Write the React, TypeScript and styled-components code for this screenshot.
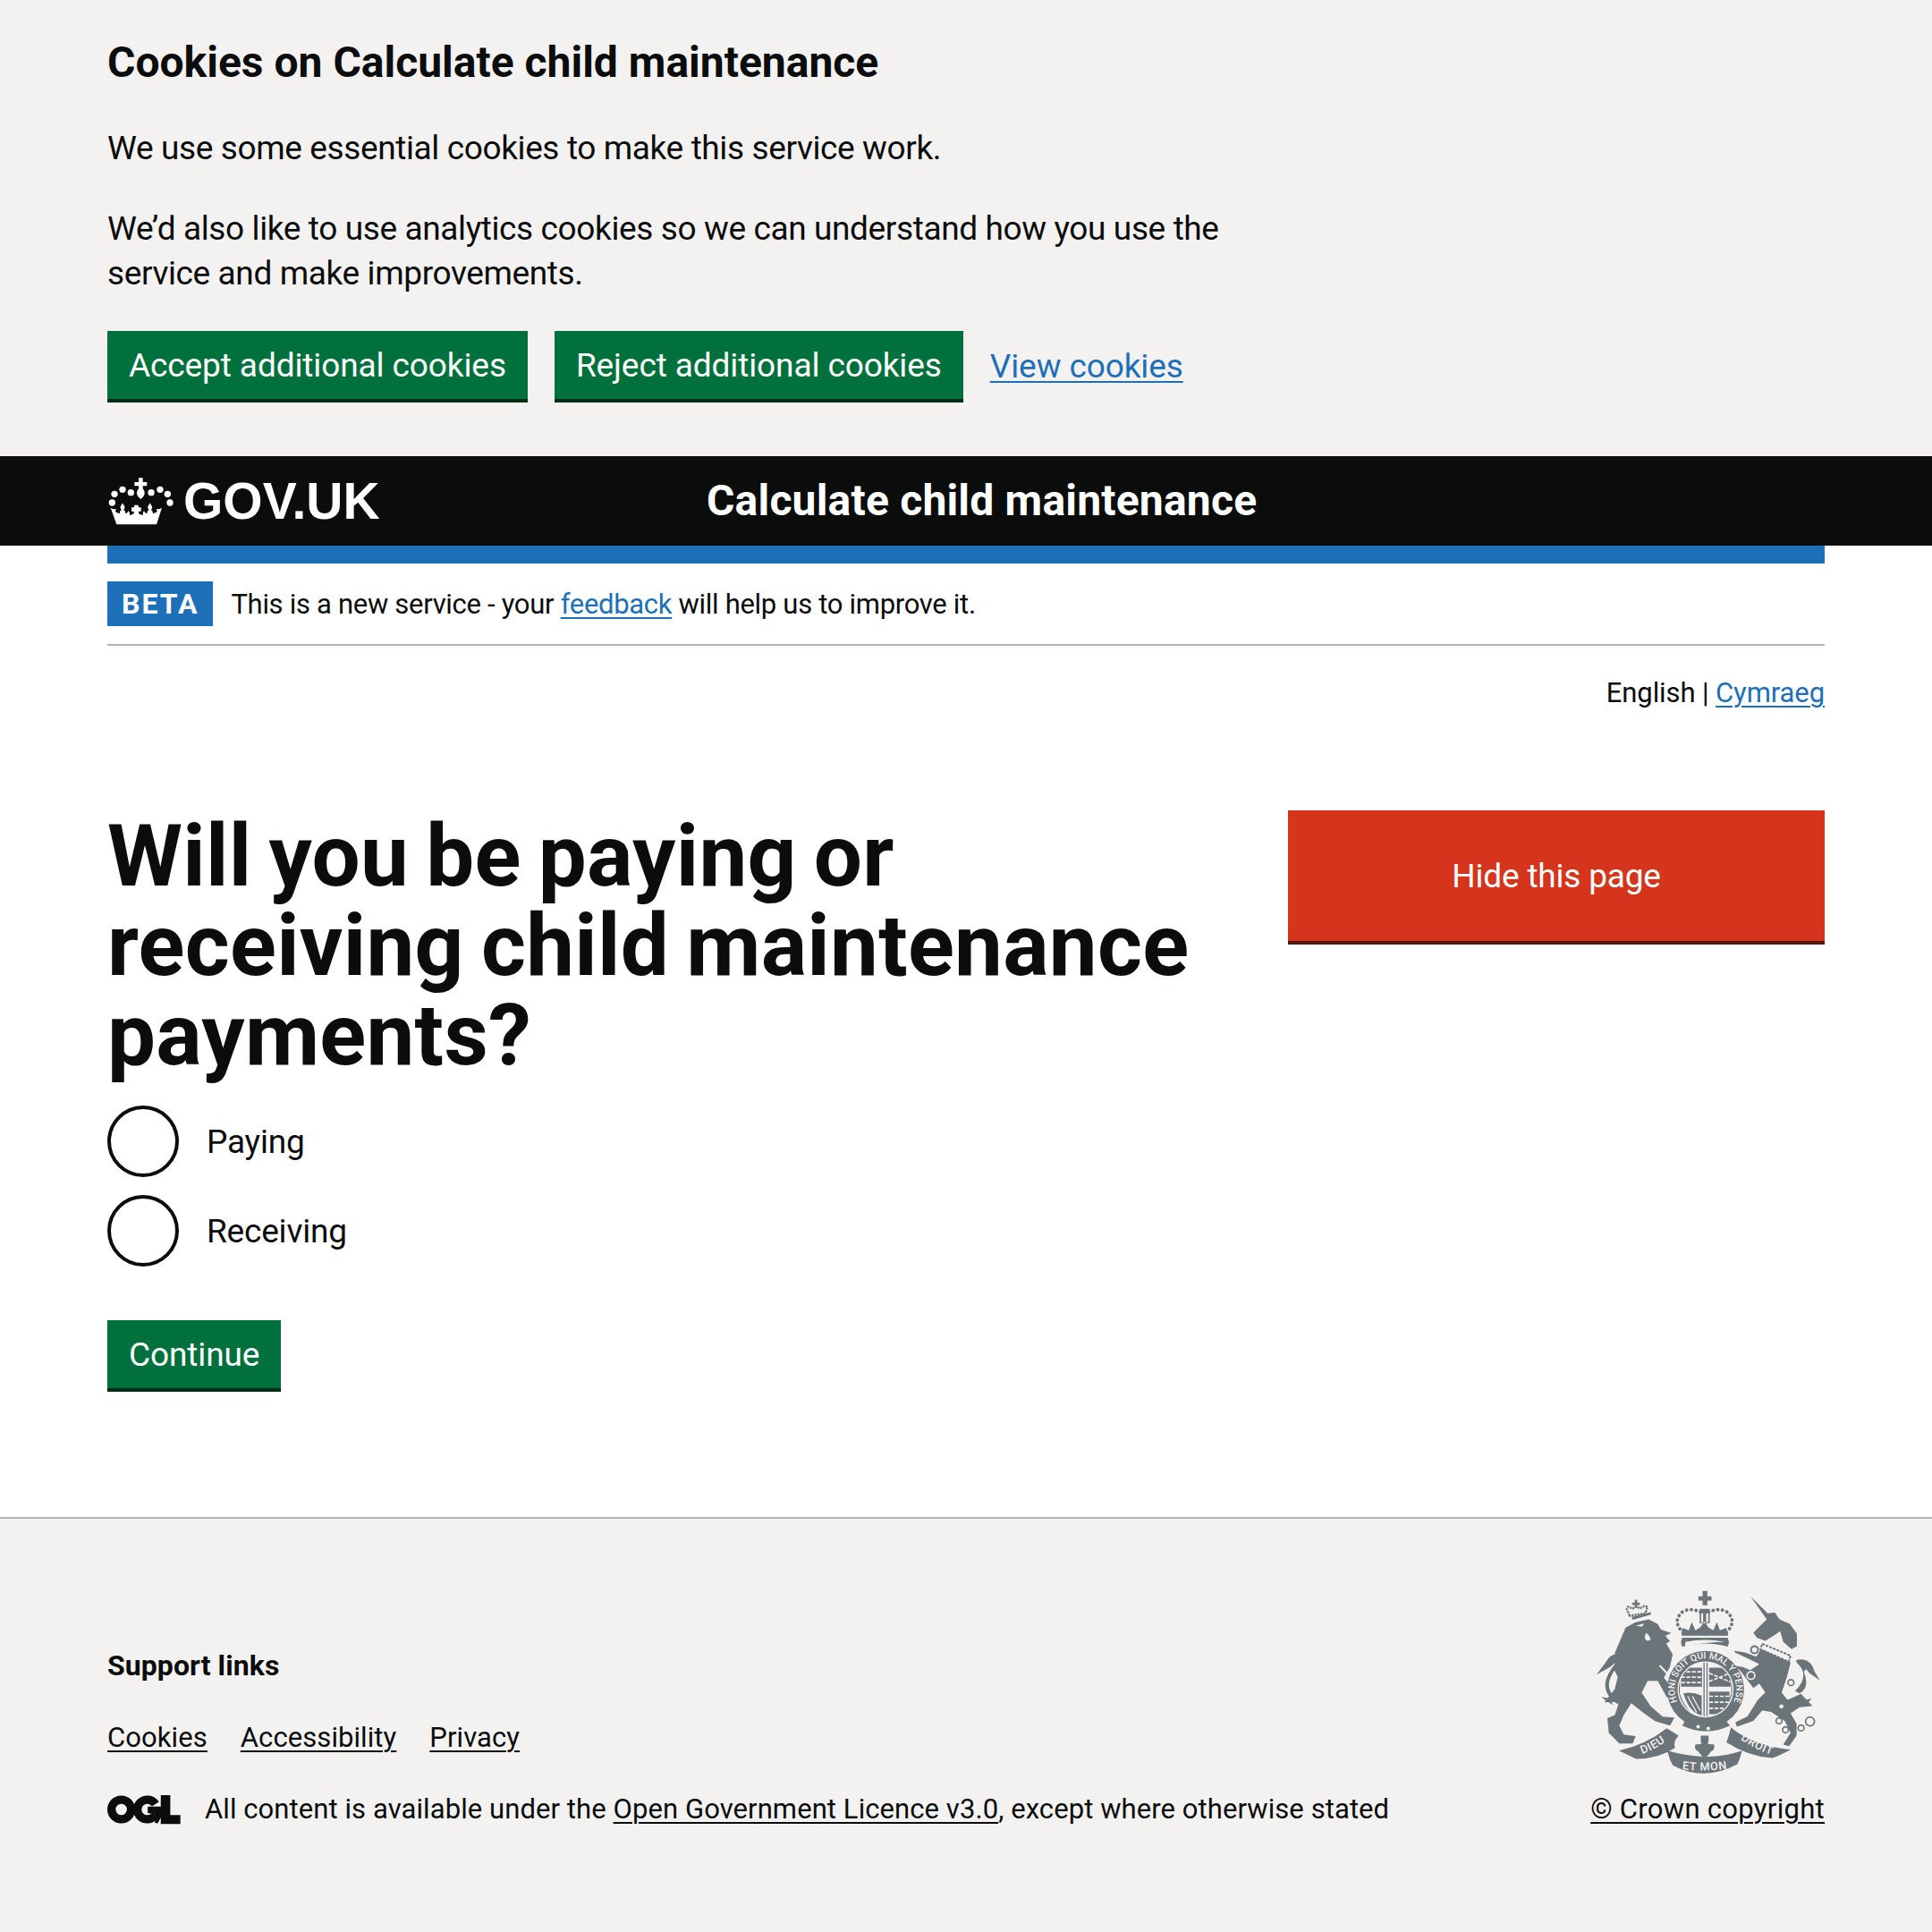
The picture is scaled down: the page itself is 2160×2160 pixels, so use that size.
import React from 'react';
import styled, { createGlobalStyle } from 'styled-components';

const GlobalStyle = createGlobalStyle`
  html, body {
    margin: 0;
    padding: 0;
    background: #ffffff;
    color: #0b0c0c;
    font-family: Roboto, 'Liberation Sans', sans-serif;
  }
  * { box-sizing: border-box; }
`;

function CrownLogo() {
  return (
    <CrownSvg viewBox="55 90 225 165" aria-hidden="true">
      <g fill="#fff">
        <circle cx="71" cy="177" r="11" />
        <circle cx="79" cy="148" r="11" />
        <circle cx="106" cy="133" r="11" />
        <circle cx="134" cy="143" r="11" />
        <circle cx="202" cy="143" r="11" />
        <circle cx="232" cy="133" r="11" />
        <circle cx="257" cy="148" r="11" />
        <circle cx="265" cy="177" r="11" />
        <path d="M160 94h14v14h14v13h-14v8q16 20 -7 36q-23 -16 -7 -36v-8h-14v-13h14z" />
        <path d="M66 194q10 6 18 4l-2 10 14 6q0-10 6-12l-4-10 8-14 8 14-4 10q6 2 6 12 8-2 10-10 6 6 4 16l14-6v-8h-8v-13h9v-8h14v8h9v13h-8v8l14 6q-2-10 4-16 2 8 10 10 0-10 6-12l-4-10 8-14 8 14-4 10q6 2 6 12l14-6-2-10q8 2 18-4l-18 56H86z" />
      </g>
    </CrownSvg>
  );
}

function OglLogo() {
  return (
    <OglSvg viewBox="60 65 247 102" aria-hidden="true">
      <circle cx="107" cy="116" r="33" fill="none" stroke="#0b0c0c" strokeWidth="28" />
      <path d="M222 98a33 33 0 1 0 0 36" fill="none" stroke="#0b0c0c" strokeWidth="28" />
      <path d="M196 106h44v-38h32v67h34v30h-66v-22l-10 20-10-2v-30l-24-3z" fill="#0b0c0c" />
    </OglSvg>
  );
}

function RoyalArms() {
  const ink = '#6b7478';
  const paper = '#f3f2f1';
  return (
    <ArmsSvg viewBox="60 50 770 620" aria-hidden="true">
      <defs>
        <path id="ring-motto" d="M372 462A103 103 0 1 1 508 462" />
        <path id="ribbon-left" d="M212 606Q270 590 320 548" />
        <path id="ribbon-mid" d="M345 650Q435 664 530 648" />
        <path id="ribbon-right" d="M548 546Q600 585 672 608" />
        <clipPath id="shield-clip">
          <circle cx="440" cy="385" r="90" />
        </clipPath>
      </defs>
      <g fill={ink}>
        {/* lion */}
        <path d="M172 178l33-18 45-10 30 16 10 18 35 12-20 10 16 18-13 7 22 36-10 44-20 35 34 40 6 24-30 1-30-55h-34l-20 40 30 45 40 35 40 3-15 27-50-15-35-25-45-35-25 40-15 35 15 30 40 5-10 25h-45l-35-35-5-50 25-10 15-45-50 2 35-45 10-40-15-30 10-30-5-20z" />
        <path d="M178 240l-8 30 14-6zM190 205l-14 20 18-4z" />
        <path d="M206 172l28-8-6 10zM240 196q12 4 16 22-14 10-20-6zM288 302l44 46-8 2-40-44z" fill={paper} />
        {/* lion crown */}
        <path d="M186 138l-10-22 4-8 16 6 12-8 12 8 14-8 12 2-8 22z" fill="none" stroke={ink} strokeWidth="7" strokeDasharray="7 3" />
        <path d="M192 142l64-16 2 8-62 18zM203 84h8v10h9v8h-9v10h-8v-10h-9v-8h9z" />
        {/* lion tail */}
        <path d="M150 430q-60-40-30-95 22-45 45-40 8 10-10 35" fill="none" stroke={ink} strokeWidth="12" />
        <path d="M150 265q-30 0-45 30l-30 40 45-25 30-25zM120 415l-30-5 40 28z" />
        {/* unicorn */}
        <path d="M590 72l58 58 24-3 16 23 34 15 24 33v42l-18 10-28-25-10-35-22 15-28 17-28-10-12-17 25-25 20-20z" />
        <path d="M625 250l100 45-13 50-17 50 20 25 45-20 38 40-43 5-30 20 20 35v40l-25 35-20-5 25-40-20-40-45-30-30-5-30 35-55 20-5-15 40-20 35-55 25-25-20-30-20 15-45-60-20-15 30 5 25 10 30-20-30-15-50-23-5-7 40 7 35 13z" />
        <path d="M630 232l95 40-7 20-94-42z" fill="none" stroke={ink} strokeWidth="6" strokeDasharray="9 4" />
        <path d="M740 390q50-50 10-90-20-20 20-15 25 5 35 40l18 30-35-25-10-12q-8 0-8 10 20 50-15 70z" />
        <path d="M725 425q40 0 70-10l-20 25-45 5z" />
        <circle cx="604" cy="252" r="12" fill="none" stroke={ink} strokeWidth="6" />
        <circle cx="592" cy="338" r="13" fill="none" stroke={paper} strokeWidth="5" />
        <circle cx="726" cy="362" r="10" fill="none" stroke={ink} strokeWidth="5" />
        <circle cx="714" cy="408" r="7" fill={paper} />
        <circle cx="694" cy="442" r="7" fill={paper} />
        <circle cx="686" cy="490" r="10" fill="none" stroke={ink} strokeWidth="5" />
        <circle cx="708" cy="520" r="10" fill="none" stroke={ink} strokeWidth="5" />
        <circle cx="760" cy="514" r="10" fill="none" stroke={ink} strokeWidth="5" />
        <circle cx="790" cy="492" r="15" fill="none" stroke={ink} strokeWidth="5" />
        {/* top crown */}
        <g fill="none" stroke={ink} strokeWidth="11" strokeDasharray="1 15" strokeLinecap="round">
          <path d="M365 195q-40-40 0-72 35-15 72 12 35-27 72-12 40 32 0 72" />
        </g>
        <path d="M430 55h16v18h14v14h-14v16h-16v-16h-14v-14h14zM420 115h34v48h-34zM360 205h156l-6-26-22 8-10-28-12 28-16-10-14-20-14 20-16 10-12-28-10 28-22-8z" />
        <path d="M425 130h7v30h-7zM442 130h7v30h-7z" fill={paper} />
        <path d="M362 212h152q8 14 0 30-70-22-152 0-8-14 0-30z" />
        <path d="M372 226q66-14 132 0-66 0-132 14z" fill={paper} />
        {/* shield ring */}
        <circle cx="440" cy="385" r="129" />
        <circle cx="440" cy="385" r="94" fill={paper} />
        <g clipPath="url(#shield-clip)">
          <path d="M352 290q45-12 83-8v208q-60-20-83-90z" fill="none" stroke={ink} strokeWidth="4" />
          <path d="M528 290q-45-12-83-8v208q60-20 83-90z" fill="none" stroke={ink} strokeWidth="4" />
          <path d="M358 312h70v64h-70zM452 312h72v64h-72zM452 392h68v76h-68z" />
          <path d="M366 398q30-6 61 8v66q-42-10-61-74z" />
          <path d="M380 408l30 54M396 408l26 48" stroke={paper} strokeWidth="4" fill="none" />
          <path d="M358 326h70M358 344h70M358 362h70M452 330l72 30M452 358l72-28M452 408h68M452 428h68M452 448h68" stroke={paper} strokeWidth="5" fill="none" strokeDasharray="13 5" />
        </g>
        <path d="M370 492q70 40 140 0l12 14q-80 38-160 0z" />
        <circle cx="415" cy="510" r="6" fill={paper} />
        <circle cx="449" cy="516" r="6" fill={paper} />
        {/* motto ribbon */}
        <path d="M150 590q90-20 160-75l40 25q-20 20-12 40-50 35-130 38z" />
        <path d="M312 590q10 40 20 50 105 55 215-5 10-20 15-45-110 40-250 0z" />
        <path d="M510 562q8-20 15-50 70 60 200 75-40 20-60 28-80-5-155-53z" />
        <path d="M424 540h26v24h-26zM437 556q10 16 30 12 8 16-10 26-4 8-8 10l-12 14-12-14q-4-2-8-10-18-10-10-26 20 4 30-12z" />
      </g>
      <ArmsText>
        <textPath href="#ring-motto" startOffset="50%" textAnchor="middle">HONI SOIT QUI MAL Y PENSE</textPath>
      </ArmsText>
      <RibbonText>
        <textPath href="#ribbon-left" startOffset="50%" textAnchor="middle">DIEU</textPath>
      </RibbonText>
      <RibbonText>
        <textPath href="#ribbon-mid" startOffset="50%" textAnchor="middle">ET MON</textPath>
      </RibbonText>
      <RibbonText>
        <textPath href="#ribbon-right" startOffset="50%" textAnchor="middle">DROIT</textPath>
      </RibbonText>
    </ArmsSvg>
  );
}

export default function App() {
  return (
    <>
      <GlobalStyle />
      <CookieBanner>
        <Container>
          <CookieTitle>Cookies on Calculate child maintenance</CookieTitle>
          <CookieText>
            <Para>We use some essential cookies to make this service work.</Para>
            <Para>
              We’d also like to use analytics cookies so we can understand how you use the service
              and make improvements.
            </Para>
          </CookieText>
          <ButtonRow>
            <GreenButton>Accept additional cookies</GreenButton>
            <GreenButton>Reject additional cookies</GreenButton>
            <BodyLink href="#">View cookies</BodyLink>
          </ButtonRow>
        </Container>
      </CookieBanner>

      <Header>
        <HeaderInner>
          <LogoLink href="#">
            <CrownLogo />
            <LogoText>GOV.UK</LogoText>
          </LogoLink>
          <ServiceName href="#">Calculate child maintenance</ServiceName>
        </HeaderInner>
      </Header>

      <Container>
        <BlueBar />
        <PhaseBanner>
          <PhaseTag>BETA</PhaseTag>
          <PhaseText>
            This is a new service - your <BodyLink href="#">feedback</BodyLink> will help us to
            improve it.
          </PhaseText>
        </PhaseBanner>
        <LanguageRow>
          English | <BodyLink href="#">Cymraeg</BodyLink>
        </LanguageRow>

        <Main>
          <Question>
            <Heading>Will you be paying or receiving child maintenance payments?</Heading>
            <Radios>
              <RadioRow>
                <RadioCircle />
                <RadioLabel>Paying</RadioLabel>
              </RadioRow>
              <RadioRow>
                <RadioCircle />
                <RadioLabel>Receiving</RadioLabel>
              </RadioRow>
            </Radios>
            <GreenButton>Continue</GreenButton>
          </Question>
          <HideButton>Hide this page</HideButton>
        </Main>
      </Container>

      <Footer>
        <FooterInner>
          <FooterMeta>
            <SupportTitle>Support links</SupportTitle>
            <SupportLinks>
              <FooterLink href="#">Cookies</FooterLink>
              <FooterLink href="#">Accessibility</FooterLink>
              <FooterLink href="#">Privacy</FooterLink>
            </SupportLinks>
            <LicenceRow>
              <OglLogo />
              <span>
                All content is available under the{' '}
                <FooterLink href="#">Open Government Licence v3.0</FooterLink>, except where
                otherwise stated
              </span>
            </LicenceRow>
          </FooterMeta>
          <CopyrightBlock>
            <RoyalArms />
            <CopyrightLink href="#">© Crown copyright</CopyrightLink>
          </CopyrightBlock>
        </FooterInner>
      </Footer>
    </>
  );
}

const Container = styled.div`
  margin: 0 120px;
`;

const CookieBanner = styled.div`
  background: #f3f2f1;
  padding: 40px 0 60px;
`;

const CookieTitle = styled.h2`
  margin: 0 0 41px;
  font-size: 48px;
  line-height: 60px;
  font-weight: 700;
`;

const CookieText = styled.div`
  width: 1280px;
  font-size: 37px;
  line-height: 50px;
  letter-spacing: -0.38px;
`;

const Para = styled.p`
  margin: 0 0 40px;
  &:last-child {
    margin-bottom: 39px;
  }
`;

const ButtonRow = styled.div`
  display: flex;
  align-items: flex-start;
  gap: 30px;
`;

const GreenButton = styled.button`
  height: 76px;
  margin-bottom: 4px;
  padding: 2px 24px 0;
  border: 0;
  border-radius: 0;
  background: #00703c;
  box-shadow: 0 4px 0 #002d18;
  color: #ffffff;
  font: 400 37px/50px Roboto, 'Liberation Sans', sans-serif;
  letter-spacing: -0.1px;
`;

const BodyLink = styled.a`
  color: #1d70b8;
  text-decoration: underline;
  text-decoration-thickness: 2px;
  text-underline-offset: 4px;
  ${ButtonRow} > & {
    font-size: 37px;
    line-height: 80px;
    letter-spacing: -0.1px;
  }
`;

const Header = styled.header`
  height: 100px;
  background: #0b0c0c;
`;

const HeaderInner = styled(Container)`
  height: 100%;
  display: flex;
  align-items: center;
`;

const LogoLink = styled.a`
  width: 670px;
  display: flex;
  align-items: center;
  gap: 10px;
  color: #ffffff;
  text-decoration: none;
`;

const CrownSvg = styled.svg`
  width: 75px;
  height: 55px;
  flex: none;
`;

const LogoText = styled.span`
  font: 700 57px/1 'Liberation Sans', Arial, sans-serif;
`;

const ServiceName = styled.a`
  color: #ffffff;
  font-size: 48px;
  line-height: 60px;
  font-weight: 700;
  letter-spacing: 0.2px;
  text-decoration: none;
`;

const BlueBar = styled.div`
  height: 20px;
  background: #1d70b8;
`;

const PhaseBanner = styled.div`
  display: flex;
  align-items: center;
  gap: 20px;
  padding: 20px 0;
  border-bottom: 2px solid #b1b4b6;
`;

const PhaseTag = styled.strong`
  height: 50px;
  padding: 0 16px;
  background: #1d70b8;
  color: #ffffff;
  font-size: 32px;
  line-height: 50px;
  letter-spacing: 2px;
  font-weight: 700;
`;

const PhaseText = styled.span`
  padding-top: 2px;
  font-size: 31px;
  line-height: 48px;
  letter-spacing: -0.3px;
`;

const LanguageRow = styled.div`
  margin-top: 28px;
  text-align: right;
  font-size: 31px;
  line-height: 50px;
  letter-spacing: -0.1px;
`;

const Main = styled.main`
  margin-top: 105px;
  padding-bottom: 140px;
  display: flex;
  justify-content: space-between;
  align-items: flex-start;
`;

const Question = styled.div`
  width: 1240px;
`;

const Heading = styled.h1`
  margin: 0 0 29px;
  padding-top: 2px;
  font-size: 96px;
  line-height: 100px;
  font-weight: 700;
  letter-spacing: 0.3px;
  word-spacing: -5px;
`;

const Radios = styled.div`
  display: flex;
  flex-direction: column;
  gap: 20px;
  margin-bottom: 60px;
`;

const RadioRow = styled.label`
  display: flex;
  align-items: center;
  gap: 31px;
`;

const RadioCircle = styled.span`
  width: 80px;
  height: 80px;
  border: 4px solid #0b0c0c;
  border-radius: 50%;
  background: #ffffff;
`;

const RadioLabel = styled.span`
  padding-top: 2px;
  font-size: 37px;
  line-height: 50px;
  letter-spacing: -0.2px;
`;

const HideButton = styled.button`
  width: 600px;
  height: 146px;
  margin-top: 1px;
  padding-top: 2px;
  border: 0;
  border-radius: 0;
  background: #d4351c;
  box-shadow: 0 4px 0 #55150b;
  color: #ffffff;
  font: 400 37px/50px Roboto, 'Liberation Sans', sans-serif;
  letter-spacing: -0.2px;
`;

const Footer = styled.footer`
  background: #f3f2f1;
  border-top: 2px solid #b1b4b6;
  padding: 79px 0 121px;
`;

const FooterInner = styled(Container)`
  display: flex;
  justify-content: space-between;
  align-items: flex-end;
`;

const FooterMeta = styled.div`
  display: flex;
  flex-direction: column;
  gap: 40px;
  font-size: 31px;
  line-height: 40px;
  letter-spacing: 0.08px;
`;

const SupportTitle = styled.h2`
  margin: 0 0 1px;
  font-size: 32px;
  line-height: 40px;
  font-weight: 700;
`;

const SupportLinks = styled.div`
  display: flex;
  gap: 37px;
`;

const FooterLink = styled.a`
  color: #0b0c0c;
  text-decoration: underline;
  text-decoration-thickness: 2px;
  text-underline-offset: 4px;
`;

const CopyrightLink = styled(FooterLink)`
  letter-spacing: 0.3px;
`;

const LicenceRow = styled.div`
  display: flex;
  align-items: center;
  gap: 27px;
`;

const OglSvg = styled.svg`
  width: 82px;
  height: 34px;
  flex: none;
`;

const CopyrightBlock = styled.div`
  display: flex;
  flex-direction: column;
  align-items: flex-end;
  gap: 19px;
  font-size: 31px;
  line-height: 40px;
`;

const ArmsSvg = styled.svg`
  width: 257px;
  height: 207px;
  margin-right: 3px;
`;

const ArmsText = styled.text`
  fill: #f3f2f1;
  font: 500 31px Roboto, sans-serif;
`;

const RibbonText = styled.text`
  fill: #f3f2f1;
  font: 500 38px Roboto, sans-serif;
  letter-spacing: 2px;
`;
